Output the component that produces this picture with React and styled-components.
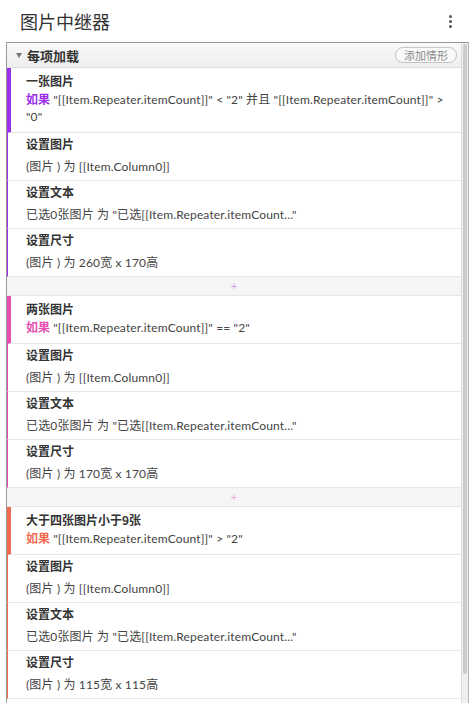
import React from "react";
import styled, { createGlobalStyle } from "styled-components";

const GlobalStyle = createGlobalStyle`
  html, body {
    margin: 0;
    padding: 0;
    background: #fff;
  }
  body {
    font-family: Lato, "Noto Sans CJK SC", sans-serif;
    color: #333;
    overflow: hidden;
  }
`;

const groups = [
  {
    name: "一张图片",
    color: "#9b30ec",
    plus: "#c9a4f2",
    cond: '"[[Item.Repeater.itemCount]]" < "2" 并且 "[[Item.Repeater.itemCount]]" > "0"',
    actions: [
      ["设置图片", "(图片 ) 为 [[Item.Column0]]"],
      ["设置文本", '已选0张图片 为 "已选[[Item.Repeater.itemCount..."'],
      ["设置尺寸", "(图片 ) 为 260宽 x 170高"],
    ],
  },
  {
    name: "两张图片",
    color: "#e64fb2",
    plus: "#f0a8d6",
    cond: '"[[Item.Repeater.itemCount]]" == "2"',
    actions: [
      ["设置图片", "(图片 ) 为 [[Item.Column0]]"],
      ["设置文本", '已选0张图片 为 "已选[[Item.Repeater.itemCount..."'],
      ["设置尺寸", "(图片 ) 为 170宽 x 170高"],
    ],
  },
  {
    name: "大于四张图片小于9张",
    color: "#f26a50",
    plus: "#f7b3a6",
    cond: '"[[Item.Repeater.itemCount]]" > "2"',
    actions: [
      ["设置图片", "(图片 ) 为 [[Item.Column0]]"],
      ["设置文本", '已选0张图片 为 "已选[[Item.Repeater.itemCount..."'],
      ["设置尺寸", "(图片 ) 为 115宽 x 115高"],
    ],
  },
];

const App = () => {
  return (
    <>
      <GlobalStyle />
      <Header>
        <Title>图片中继器</Title>
        <MoreButton>
          <span />
          <span />
          <span />
        </MoreButton>
      </Header>
      <Panel>
        <Content>
          <SectionHeader>
            <SectionLabel>
              <Caret />
              每项加载
            </SectionLabel>
            <AddButton>添加情形</AddButton>
          </SectionHeader>
          {groups.map((g, i) => (
            <React.Fragment key={g.name}>
              {i > 0 && <Separator $color={groups[i - 1].plus}>+</Separator>}
              <CaseHeader $color={g.color}>
                <CaseName>{g.name}</CaseName>
                <CaseCond>
                  <IfWord $color={g.color}>如果</IfWord> {g.cond}
                </CaseCond>
              </CaseHeader>
              {g.actions.map(([t, v]) => (
                <ActionRow key={t} $color={g.color}>
                  <ActionTitle>{t}</ActionTitle>
                  <ActionValue>{v}</ActionValue>
                </ActionRow>
              ))}
            </React.Fragment>
          ))}
        </Content>
        <ScrollTrack>
          <ScrollThumb />
        </ScrollTrack>
      </Panel>
    </>
  );
};

export default App;

const Header = styled.div`
  height: 42px;
  display: flex;
  align-items: center;
  justify-content: space-between;
  padding: 0 18px 0 20px;
  box-sizing: border-box;
`;

const Title = styled.div`
  font-size: 18px;
  color: #333;
  font-family: "Noto Sans CJK SC", sans-serif;
`;

const MoreButton = styled.div`
  display: flex;
  flex-direction: column;
  gap: 2px;
  span {
    width: 3px;
    height: 3px;
    border-radius: 50%;
    background: #555;
  }
`;

const Panel = styled.div`
  margin: 0 1px 0 6px;
  height: 661px;
  border-left: 1px solid #999;
  border-top: 1px solid #999;
  border-right: 1px solid #b5b5b5;
  display: flex;
  overflow: hidden;
`;

const Content = styled.div`
  flex: 1;
  min-width: 0;
  display: flex;
  flex-direction: column;
`;

const SectionHeader = styled.div`
  height: 24px;
  flex-shrink: 0;
  display: flex;
  align-items: center;
  justify-content: space-between;
  padding: 0 4px 0 9px;
  background: linear-gradient(#f9f9f9, #eeeeee);
  border-bottom: 1px solid #dedede;
`;

const SectionLabel = styled.div`
  display: flex;
  align-items: center;
  gap: 5px;
  font-size: 13px;
  font-weight: bold;
  color: #333;
  font-family: "Noto Sans CJK SC", sans-serif;
`;

const Caret = styled.span`
  width: 0;
  height: 0;
  border-left: 3.5px solid transparent;
  border-right: 3.5px solid transparent;
  border-top: 5px solid #777;
`;

const AddButton = styled.div`
  width: 62px;
  height: 16px;
  box-sizing: border-box;
  border: 1px solid #c4c4c4;
  border-radius: 8px;
  background: #fafafa;
  font-size: 11px;
  line-height: 14px;
  text-align: center;
  color: #8a8a8a;
  font-family: "Noto Sans CJK SC", sans-serif;
`;

const CaseHeader = styled.div`
  flex-shrink: 0;
  border-left: 4px solid ${({ $color }) => $color};
  border-bottom: 1px solid #e6e6e6;
  padding: 4px 10px 7px 15px;
  background: #fff;
  box-shadow: inset 0 -2px 2px -2px rgba(0, 0, 0, 0.08);
`;

const CaseName = styled.div`
  font-size: 12px;
  line-height: 18px;
  font-weight: bold;
  color: #333;
  font-family: "Noto Sans CJK SC", sans-serif;
`;

const CaseCond = styled.div`
  font-size: 12px;
  line-height: 17px;
  letter-spacing: 0.15px;
  color: #444;
`;

const IfWord = styled.span`
  color: ${({ $color }) => $color};
  font-weight: bold;
  font-size: 12px;
  letter-spacing: 0;
  font-family: "Noto Sans CJK SC", sans-serif;
`;

const ActionRow = styled.div`
  flex-shrink: 0;
  border-left: 1px solid ${({ $color }) => $color};
  border-bottom: 1px solid #e8e8e8;
  padding: 2px 12px 3px 18px;
`;

const ActionTitle = styled.div`
  font-size: 12px;
  line-height: 18px;
  font-weight: bold;
  color: #333;
  font-family: "Noto Sans CJK SC", sans-serif;
`;

const ActionValue = styled.div`
  margin-top: 4px;
  font-size: 12px;
  line-height: 20px;
  letter-spacing: 0.15px;
  color: #444;
  white-space: nowrap;
`;

const Separator = styled.div`
  flex-shrink: 0;
  height: 18px;
  background: #f5f5f5;
  border-bottom: 1px solid #e6e6e6;
  text-align: center;
  font-size: 11px;
  line-height: 18px;
  color: ${({ $color }) => $color};
`;

const ScrollTrack = styled.div`
  width: 6px;
  flex-shrink: 0;
  background: #efefef;
  border-left: 1px solid #dcdcdc;
  padding: 1px 0;
`;

const ScrollThumb = styled.div`
  height: 630px;
  margin: 0 1px;
  border-radius: 2px;
  background: #cbcbcb;
`;
